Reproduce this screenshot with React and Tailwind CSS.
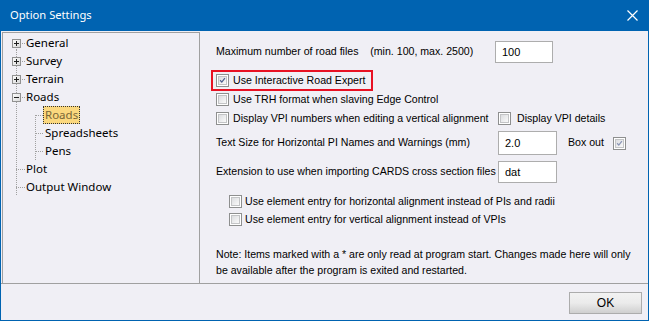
import React from "react";

const SANS = { fontFamily: '"Liberation Sans", Arial, sans-serif' };
const UI = { fontFamily: '"Noto Sans", "Open Sans", sans-serif' };

function Check({ checked, disabled }) {
  return (
    <div className="w-[13px] h-[13px] border border-[#8e8f8f] bg-white p-[1px] shrink-0">
      <div className="w-full h-full border border-[#c3c4c6] bg-gradient-to-br from-[#dcdde0] to-[#fafafa] relative">
        {checked && (
          <svg viewBox="0 0 9 9" className="absolute inset-0 w-full h-full">
            <path
              d="M1.5 4.2 L3.6 6.6 L7.6 1.4"
              fill="none"
              stroke={disabled ? "#8b95b5" : "#4d5f8f"}
              strokeWidth="1.6"
            />
          </svg>
        )}
      </div>
    </div>
  );
}

function Plus({ minus }) {
  return (
    <div className="w-[9px] h-[9px] border border-[#919191] bg-gradient-to-br from-[#fbfbfb] to-[#d9d9d9] flex items-center justify-center relative z-10">
      <div className="absolute w-[5px] h-[1px] bg-[#1f1f1f]" />
      {!minus && <div className="absolute w-[1px] h-[5px] bg-[#1f1f1f]" />}
    </div>
  );
}

function TopItem({ label, expander, minus }) {
  return (
    <div className="h-[18px] flex items-center relative">
      <div className="w-[23px] h-full relative shrink-0">
        <div className="absolute left-[13px] top-[9px] w-[9px] border-t border-dotted border-[#a0a0a0]" />
        {expander && (
          <div className="absolute left-[9px] top-[5px]">
            <Plus minus={minus} />
          </div>
        )}
      </div>
      <span className="text-[11.5px] text-black leading-none whitespace-nowrap" style={UI}>
        {label}
      </span>
    </div>
  );
}

function ChildItem({ label, selected }) {
  return (
    <div className="h-[18px] flex items-center relative">
      <div className="w-[40px] h-full relative shrink-0">
        <div className="absolute left-[32px] top-[9px] w-[8px] border-t border-dotted border-[#a0a0a0]" />
      </div>
      <span
        className={
          "text-[11.5px] leading-none px-[1px] py-[2px] whitespace-nowrap " +
          (selected
            ? "bg-[#fbd87e] border border-dotted border-[#333] text-[#7a6637]"
            : "border border-transparent text-black")
        }
        style={UI}
      >
        {label}
      </span>
    </div>
  );
}

function Input({ value, w }) {
  return (
    <div
      className={"border border-[#adadad] bg-white flex items-center pl-[6px] text-[11px] text-black shrink-0 " + w}
      style={SANS}
    >
      {value}
    </div>
  );
}

export default function App() {
  return (
    <div className="w-[649px] h-[321px] bg-[#0063b1] p-[1px] pt-0 flex flex-col select-none">
      <div className="h-[31px] flex items-center justify-between pl-[9px] pr-[10px] shrink-0">
        <span className="text-white text-[11.2px]" style={UI}>
          Option Settings
        </span>
        <svg width="11" height="11" viewBox="0 0 11 11">
          <path d="M0.5 0.5 L10.5 10.5 M10.5 0.5 L0.5 10.5" stroke="white" strokeWidth="1.2" />
        </svg>
      </div>
      <div className="flex-1 bg-[#f0eff5] flex flex-col">
        <div className="h-[253px] flex shrink-0 border-b border-[#a0a0a0]">
          {/* tree */}
          <div className="ml-[1px] mt-[1px] w-[198px] shrink-0 border-l border-t border-r border-[#a0a0a0] pt-[1px] relative">
            <div className="absolute left-[13px] top-[16px] h-[146px] border-l border-dotted border-[#a0a0a0]" />
            <div className="absolute left-[32px] top-[82px] h-[45px] border-l border-dotted border-[#a0a0a0]" />
            <TopItem label="General" expander />
            <TopItem label="Survey" expander />
            <TopItem label="Terrain" expander />
            <TopItem label="Roads" expander minus />
            <ChildItem label="Roads" selected />
            <ChildItem label="Spreadsheets" />
            <ChildItem label="Pens" />
            <TopItem label="Plot" />
            <TopItem label="Output Window" />
          </div>
          {/* settings */}
          <div className="flex-1 pl-[16px] text-[10.6px] text-black flex flex-col whitespace-nowrap" style={SANS}>
            <div className="mt-[10px] h-[22px] flex items-center">
              <span className="w-[279px] shrink-0">
                Maximum number of road files&nbsp;&nbsp;&nbsp;&nbsp;(min. 100, max. 2500)
              </span>
              <Input value="100" w="w-[58px] h-[22px]" />
            </div>
            <div className="mt-[7px] ml-[-5px] w-[162px] h-[21px] border-2 border-[#e81123] flex items-center pl-[3px] gap-[4px]">
              <Check checked />
              <span>Use Interactive Road Expert</span>
            </div>
            <div className="mt-[0px] h-[17px] flex items-center gap-[4px]">
              <Check />
              <span>Use TRH format when slaving Edge Control</span>
            </div>
            <div className="mt-[2px] h-[17px] flex items-center">
              <div className="w-[282px] flex items-center gap-[4px] shrink-0">
                <Check />
                <span>Display VPI numbers when editing a vertical alignment</span>
              </div>
              <div className="flex items-center gap-[6px]">
                <Check />
                <span>Display VPI details</span>
              </div>
            </div>
            <div className="mt-[4px] h-[24px] flex items-center">
              <span className="w-[282px] shrink-0">Text Size for Horizontal PI Names and Warnings (mm)</span>
              <Input value="2.0" w="w-[59px] h-[24px]" />
              <span className="ml-[11px] w-[45px] shrink-0">Box out</span>
              <Check checked disabled />
            </div>
            <div className="mt-[6px] h-[22px] flex items-center">
              <span className="w-[282px] shrink-0">Extension to use when importing CARDS cross section files</span>
              <Input value="dat" w="w-[59px] h-[22px]" />
            </div>
            <div className="mt-[10px] ml-[13px] h-[17px] flex items-center gap-[3px]">
              <Check />
              <span>Use element entry for horizontal alignment instead of PIs and radii</span>
            </div>
            <div className="mt-[1px] ml-[13px] h-[17px] flex items-center gap-[3px]">
              <Check />
              <span>Use element entry for vertical alignment instead of VPIs</span>
            </div>
            <div className="mt-[18px] leading-[16px]">
              Note: Items marked with a * are only read at program start. Changes made here will only
              <br />
              be available after the program is exited and restarted.
            </div>
          </div>
        </div>
        <div className="flex-1 flex justify-end items-start pt-[8px] pr-[6px]">
          <div
            className="w-[73px] h-[22px] border border-[#acacac] bg-gradient-to-b from-[#f2f2f2] via-[#ebebeb] to-[#cfcfcf] flex items-center justify-center text-[12px] text-black"
            style={SANS}
          >
            OK
          </div>
        </div>
      </div>
    </div>
  );
}
